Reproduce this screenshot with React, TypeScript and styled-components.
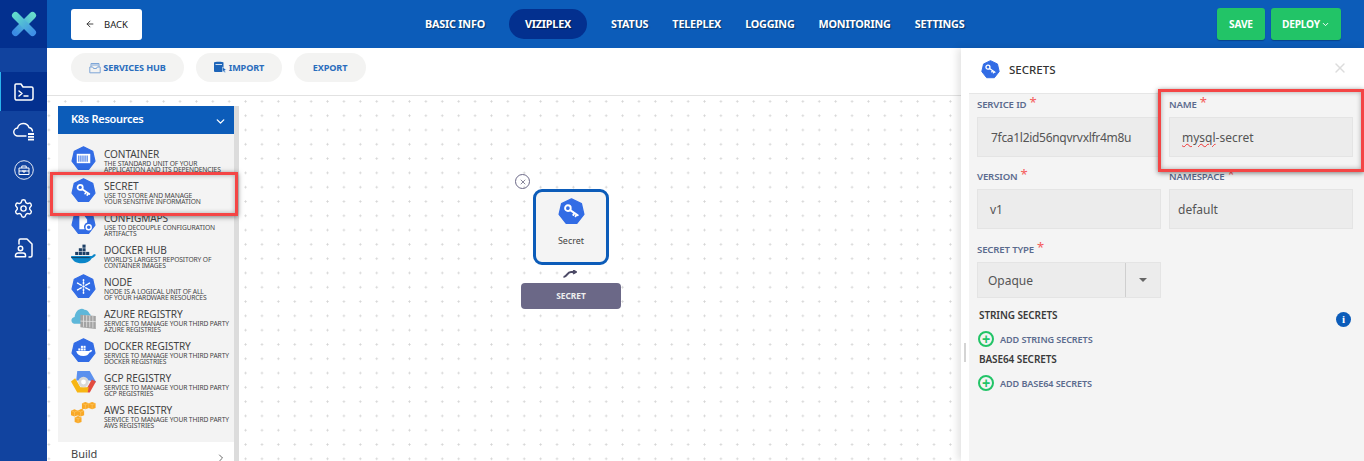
import React from "react";
import styled, { createGlobalStyle } from "styled-components";
import { ArrowLeft, ChevronDown, ChevronRight, Settings, X } from "lucide-react";

const GlobalStyle = createGlobalStyle`
    html, body {
        margin: 0;
        height: 461px;
        overflow: hidden;
        background: #fff;
        font-family: "Noto Sans", "Open Sans", sans-serif;
    }
    * { box-sizing: border-box; }
`;

const Page = styled.div`
    display: flex;
    width: 1364px;
    height: 461px;
    overflow: hidden;
`;

const Sidebar = styled.aside`
    width: 47px;
    flex: none;
    background: #11439f;
`;
const LogoBox = styled.div`
    height: 48px;
    margin-bottom: 24px;
    background: #03308f;
    display: flex;
    align-items: center;
    justify-content: center;
`;
const SideItem = styled.div<{ $active?: boolean }>`
    height: 39px;
    display: flex;
    align-items: center;
    justify-content: center;
    color: #fff;
    background: ${(p) => (p.$active ? "#03308f" : "transparent")};
    border-left: ${(p) => (p.$active ? "1px solid #2bb4ee" : "none")};
`;

const Main = styled.div`
    flex: 1;
    min-width: 0;
    display: flex;
    flex-direction: column;
`;
const Topbar = styled.header`
    height: 48px;
    flex: none;
    background: #0c5cb9;
    display: flex;
    align-items: center;
    padding: 0 23px 0 24px;
`;
const BackButton = styled.button`
    width: 71px;
    height: 31px;
    border: none;
    border-radius: 3px;
    background: #fff;
    color: #222;
    font: 400 9.5px "Noto Sans", sans-serif;
    display: flex;
    align-items: center;
    justify-content: center;
    gap: 9px;
    padding: 0;
`;
const Nav = styled.nav`
    margin-left: 271px;
    display: flex;
    align-items: center;
`;
const NavItem = styled.span<{ $active?: boolean }>`
    height: 30px;
    line-height: 30px;
    padding: 0 ${(p) => (p.$active ? "16px" : "12px")};
    margin: 0 ${(p) => (p.$active ? "12px" : "0")};
    border-radius: 15px;
    background: ${(p) => (p.$active ? "#03308f" : "transparent")};
    color: #fff;
    font-size: 10.8px;
    font-weight: 700;
    letter-spacing: -0.2px;
    text-shadow: 1px 1px 1px rgba(0, 0, 0, 0.45);
    white-space: nowrap;
`;
const Actions = styled.div`
    margin-left: auto;
    display: flex;
    gap: 6px;
`;
const ActionButton = styled.button<{ $width: number }>`
    width: ${(p) => p.$width}px;
    height: 32px;
    border: none;
    border-radius: 3px;
    background: #22c467;
    color: #fff;
    font: 700 10.2px "Noto Sans", sans-serif;
    letter-spacing: -0.2px;
    display: flex;
    align-items: center;
    justify-content: center;
    gap: 1px;
    padding: 0;
    box-shadow: 0 1px 1px rgba(0, 0, 0, 0.25);
`;

const Content = styled.div`
    flex: 1;
    min-height: 0;
    display: flex;
`;
const Workspace = styled.div`
    flex: 1;
    min-width: 0;
    display: flex;
    flex-direction: column;
`;
const Toolbar = styled.div`
    height: 48px;
    flex: none;
    display: flex;
    gap: 12px;
    padding: 5px 0 0 24px;
    border-bottom: 1px solid #e2e2e2;
`;
const Pill = styled.button<{ $width: number }>`
    width: ${(p) => p.$width}px;
    height: 29px;
    border: none;
    border-radius: 15px;
    background: #f3f3f2;
    color: #2a6dbd;
    font: 700 9.1px "Noto Sans", sans-serif;
    letter-spacing: -0.1px;
    display: flex;
    align-items: center;
    justify-content: center;
    gap: 2px;
    padding: 0;
`;

const Canvas = styled.div`
    flex: 1;
    min-height: 0;
    position: relative;
    overflow: hidden;
    padding: 10px 0 0 11px;
    background-color: #fff;
    background-image: radial-gradient(circle, #d4d4d4 0.9px, transparent 1.1px);
    background-size: 16.4px 14.3px;
    background-position: -6.3px -1.75px;
`;
const Palette = styled.div`
    width: 181px;
    height: 355px;
    display: flex;
    border-right: 5px solid #dcdcdc;
`;
const PaletteInner = styled.div`
    width: 176px;
    display: flex;
    flex-direction: column;
`;
const PaletteHeader = styled.div`
    height: 28px;
    flex: none;
    background: #0c5cb9;
    color: #fff;
    display: flex;
    align-items: center;
    justify-content: space-between;
    padding: 0 7px 3px 13px;
    font-size: 11px;
    font-weight: 600;
    letter-spacing: -0.3px;
    svg {
        margin-top: 5px;
    }
`;
const PaletteList = styled.div`
    height: 308px;
    flex: none;
    padding-top: 8px;
    background: #f3f3f3;
`;
const Resource = styled.div<{ $picked?: boolean }>`
    height: 32px;
    position: relative;
    z-index: ${(p) => (p.$picked ? 1 : "auto")};
    display: flex;
    padding-left: 13px;
`;
const ResourceIcon = styled.div`
    width: 25px;
    height: 32px;
    padding-top: 4px;
    flex: none;
    line-height: 0;
`;
const ResourceText = styled.div`
    margin-left: 8px;
    padding-top: 7px;
    color: #444;
    white-space: nowrap;
`;
const ResourceTitle = styled.div`
    font-size: 10.1px;
    line-height: 11px;
    letter-spacing: -0.1px;
`;
const ResourceDesc = styled.div`
    margin-top: 1px;
    font-size: 6.7px;
    line-height: 6.4px;
    letter-spacing: -0.12px;
`;
const Highlight = styled.div<{ $top: number; $right: number; $bottom: number; $left: number }>`
    position: absolute;
    z-index: -1;
    top: ${(p) => p.$top}px;
    right: ${(p) => p.$right}px;
    bottom: ${(p) => p.$bottom}px;
    left: ${(p) => p.$left}px;
    border: 3px solid #f44545;
    background: #f4f4f4;
    box-shadow: 0 1px 5px rgba(0, 0, 0, 0.5), inset 0 0 5px rgba(0, 0, 0, 0.3);
`;
const BuildRow = styled.div`
    flex: 1;
    background: #fff;
    color: #444;
    font-size: 11px;
    display: flex;
    justify-content: space-between;
    padding: 4px 7px 0 13px;
    svg {
        margin-top: 6px;
    }
`;

const NodeClose = styled.div`
    position: absolute;
    left: 468px;
    top: 78px;
    width: 15px;
    height: 15px;
    border: 1px solid #6b6887;
    border-radius: 50%;
    color: #4c4a66;
    display: flex;
    align-items: center;
    justify-content: center;
`;
const Node = styled.div`
    position: absolute;
    left: 486px;
    top: 93px;
    width: 76px;
    height: 76px;
    border: 3px solid #0c5cb9;
    border-radius: 9px;
    background: #f4f4f4;
    display: flex;
    flex-direction: column;
    align-items: center;
    padding-top: 6px;
    color: #444;
    font-size: 9px;
    gap: 9px;
`;
const NodeLink = styled.div`
    position: absolute;
    left: 516px;
    top: 174px;
    line-height: 0;
`;
const NodeTag = styled.div`
    position: absolute;
    left: 474px;
    top: 187px;
    width: 100px;
    height: 26px;
    padding-bottom: 1px;
    border-radius: 4px;
    background: #6b6887;
    color: #eee;
    font-size: 8.4px;
    font-weight: 700;
    display: flex;
    align-items: center;
    justify-content: center;
`;

const Panel = styled.section`
    width: 403px;
    flex: none;
    display: flex;
    flex-direction: column;
    background: #fff;
    position: relative;
    box-shadow: -3px 0 8px rgba(0, 0, 0, 0.12);
`;
const PanelHead = styled.div`
    height: 45px;
    flex: none;
    display: flex;
    align-items: center;
    padding: 0 16px 3px 20px;
    gap: 9px;
    color: #333;
    font-size: 11.5px;
    font-weight: 500;
`;
const CloseButton = styled.div`
    margin: -2px 0 0 auto;
    color: #dcdcdc;
    line-height: 0;
`;
const PanelBody = styled.div`
    flex: 1;
    margin-left: 8px;
    padding: 0 13px 0 8px;
    background: #f4f4f4;
    border-top: 1px solid #e6e6e6;
`;
const Handle = styled.div`
    position: absolute;
    left: 3px;
    top: 295px;
    width: 2px;
    height: 19px;
    background: #d4d4d4;
`;
const FormGrid = styled.div`
    display: grid;
    grid-template-columns: 184px 184px;
    column-gap: 8px;
    row-gap: 9px;
`;
const Field = styled.div`
    position: relative;
    z-index: 1;
`;
const NameField = styled(Field)`
    z-index: 2;
`;
const SelectField = styled(Field)`
    margin-top: 1px;
`;
const FieldLabel = styled.div`
    height: 20px;
    margin-bottom: 3px;
    display: flex;
    align-items: center;
    gap: 3px;
    color: #5b6b8e;
    font-size: 9.6px;
    font-weight: 600;
    letter-spacing: -0.15px;
`;
const Star = styled.span`
    color: #f45a5a;
    font-size: 13px;
    font-weight: 400;
    line-height: 13px;
    margin-top: -3px;
`;
const InputBox = styled.div<{ $indent: number; $tracking?: number }>`
    height: 40px;
    display: flex;
    align-items: center;
    padding-left: ${(p) => p.$indent}px;
    background: #ececec;
    border: 1px solid #e4e4e4;
    color: #555;
    font-size: 12px;
    letter-spacing: ${(p) => p.$tracking ?? 0}px;
    white-space: nowrap;
    overflow: hidden;
`;
const Misspelled = styled.span`
    text-decoration: underline wavy #e33;
    text-decoration-thickness: 1px;
`;
const SelectBox = styled.div`
    width: 184px;
    height: 36px;
    display: flex;
    background: #ececec;
    border: 1px solid #e4e4e4;
    color: #555;
    font-size: 12px;
`;
const SelectValue = styled.div`
    flex: 1;
    display: flex;
    align-items: center;
    padding-left: 10px;
    border-right: 1px solid #cfcfcf;
`;
const SelectCaret = styled.div`
    width: 34px;
    display: flex;
    align-items: center;
    justify-content: center;
    &::after {
        content: "";
        border: 4px solid transparent;
        border-top: 4px solid #666;
        margin-top: 4px;
    }
`;
const Section = styled.div`
    margin-top: 9px;
    padding-left: 2px;
`;
const SectionHead = styled.div`
    height: 16px;
    display: flex;
    align-items: center;
    justify-content: space-between;
    color: #3a3a3a;
    font-size: 10px;
    font-weight: 600;
    letter-spacing: -0.1px;
`;
const InfoDot = styled.div`
    width: 15px;
    height: 15px;
    border-radius: 50%;
    background: #0c5cb9;
    color: #fff;
    font: 700 11px "Liberation Serif", serif;
    display: flex;
    align-items: center;
    justify-content: center;
    margin-top: 8px;
`;
const AddRow = styled.div`
    height: 16px;
    margin: 8px 0 4px;
    display: flex;
    align-items: center;
    gap: 6px;
    color: #5b6b8e;
    font-size: 9.1px;
    font-weight: 600;
    letter-spacing: -0.1px;
`;
const AddCircle = styled.span`
    width: 16px;
    height: 16px;
    margin-left: -1px;
    border: 2px solid #22c467;
    border-radius: 50%;
    color: #22c467;
    display: flex;
    align-items: center;
    justify-content: center;
    font: 700 14px/1 "Liberation Sans", sans-serif;
`;

const HEPT = "M12 .8 20.8 5 23 14.6 16.9 22.4H7.1L1 14.6 3.2 5Z";
const BLUE = "#326ce5";

const Hept: React.FC<{ size?: number; children?: React.ReactNode }> = ({ size = 25, children }) => (
    <svg width={size} height={size} viewBox="0 0 24 24">
        <path d={HEPT} fill={BLUE} stroke={BLUE} strokeWidth="1.2" strokeLinejoin="round" />
        {children}
    </svg>
);

const KeyMark = () => (
    <g fill="none" stroke="#fff" strokeWidth="1.7" strokeLinecap="round">
        <circle cx="8.8" cy="9" r="2.5" />
        <path d="M10.8 10.8 17.6 15.4M14.6 13.4l-1 1.6M16.6 14.7l-1 1.6" />
    </g>
);

const ContainerIcon = () => (
    <Hept>
        <rect x="5.5" y="7.5" width="13" height="9" fill="#fff" />
        <path d="M7.5 9v6M9.5 9v6M11.5 9v6M13.5 9v6M15.5 9v6" stroke={BLUE} strokeWidth="1" />
    </Hept>
);
const SecretIcon = () => (
    <Hept>
        <KeyMark />
    </Hept>
);
const ConfigIcon = () => (
    <Hept>
        <path d="M8 5h4.5l3 4v3a4.5 4.5 0 0 0-2.5 6.500H8Z" fill="#fff" />
        <circle cx="17" cy="16.500" r="2.400" fill="none" stroke="#fff" strokeWidth="1.400" />
    </Hept>
);
const DockerHubIcon = () => (
    <svg width="25" height="25" viewBox="0 0 24 24">
        <path d="M0 13.500h19c1 0 2.500-1 3-2l2 .8c-1 2-2.500 3-4 3.200-2 3-5 5-9.500 5-6 0-9.500-2.500-10.500-7Z" fill="#0a86c9" />
        <g fill="#1c3f66">
            <rect x="4" y="9.500" width="3" height="3" />
            <rect x="7.500" y="9.500" width="3" height="3" />
            <rect x="11" y="9.500" width="3" height="3" />
            <rect x="7.500" y="6" width="3" height="3" />
            <rect x="11" y="6" width="3" height="3" />
            <rect x="11" y="2.500" width="3" height="3" />
            <rect x="14.500" y="9.500" width="3" height="3" />
        </g>
        <path d="M0 15h18" stroke="#16334f" strokeWidth="0.800" />
    </svg>
);
const NodeIcon = () => (
    <Hept>
        <g stroke="#fff" strokeWidth="1.500" strokeLinecap="round" strokeDasharray="1.600 1.400">
            <path d="M12 9.500V5.500M12 14.500v4M9.800 10.700 6.300 8.800M14.200 13.300l3.500 1.900M9.800 13.300l-3.500 1.900M14.200 10.700l3.500-1.900" />
        </g>
        <circle cx="12" cy="12" r="1.200" fill="#fff" />
    </Hept>
);
const AzureIcon = () => (
    <svg width="25" height="25" viewBox="0 0 24 24">
        <path d="M3 17c-3.500-.500-3.500-6 .500-6.500C4 5 9 1 13 3.500c2 0 4 1.500 4.500 3.500l2 2H10v8Z" fill="#5eb7d9" />
        <path d="M9 8.500 23.800 9.500V22L9 20.500Z" fill="#a3a3a3" />
        <path d="M9 14.500 23.800 15M12 9v11M15 9v11.500M18 9.500v11M21 9.500v11.500" stroke="#e8e8e8" strokeWidth="0.700" />
    </svg>
);
const DockerRegistryIcon = () => (
    <Hept>
        <path d="M5 12.500h12c.8 0 1.500-.6 2-1.200l1.400.6c-.6 1.200-1.600 1.800-2.600 2-1.200 2.200-3 3.400-5.800 3.400-4 0-6.300-1.700-7-4.800Z" fill="#fff" />
        <g fill="#fff">
            <rect x="7" y="10" width="2" height="2" />
            <rect x="9.500" y="10" width="2" height="2" />
            <rect x="12" y="10" width="2" height="2" />
            <rect x="9.500" y="7.500" width="2" height="2" />
            <rect x="12" y="7.500" width="2" height="2" />
        </g>
    </Hept>
);
const GcpIcon = () => (
    <svg width="25" height="25" viewBox="0 0 24 24">
        <path d="M6 1h12l6 10.500-3.500 2-2-3.500H5Z" fill="#5b90ee" />
        <path d="M18 21.500 24 11l-4-1.800-5.500 9.500 1.500 2.800Z" fill="#e34c3f" />
        <path d="M6 21.500 0 11l4-3 5 8.500h8l-1 5Z" fill="#f7b614" />
        <circle cx="12" cy="11.500" r="5" fill="#d9d9d9" />
        <circle cx="12" cy="11.500" r="2.300" fill="#fff" />
    </svg>
);
const AwsIcon = () => {
    const cube = (x: number, y: number, key: string) => (
        <g key={key}>
            <path d={`M${x} ${y + 1.300}l3.300-1.300 3.300 1.300v4.400l-3.300 1.300-3.300-1.300Z`} fill="#f9a825" />
            <path d={`M${x} ${y + 1.300}l3.300 1.300 3.300-1.300M${x + 3.300} ${y + 2.600}v4.400`} stroke="#fcd98a" strokeWidth="0.400" fill="none" />
        </g>
    );
    return (
        <svg width="25" height="25" viewBox="0 0 24 24">
            <path d="M6 11 13 5" stroke="#f9a825" strokeWidth="1.200" />
            {cube(10.500, 0, "a")}
            {cube(17, 0, "b")}
            {cube(0, 7, "c")}
            {cube(6, 7, "d")}
            {cube(3.500, 13.500, "e")}
        </svg>
    );
};

const FolderTerminal = () => (
    <svg width="20" height="18" viewBox="0 0 20 18" fill="none" stroke="#fff" strokeWidth="1.500" strokeLinecap="round" strokeLinejoin="round">
        <path d="M1 3.500V15a2 2 0 0 0 1 2h15a2 2 0 0 0 2-2V5.500a1.500 1.500 0 0 0-1.500-1.500H9L7 1H2a1 1 0 0 0-1 1Z" />
        <path d="m5 8 3 2.500L5 13M10 13h4" />
    </svg>
);
const CloudList = () => (
    <svg width="22" height="20" viewBox="0 0 22 20" fill="none" stroke="#fff" strokeWidth="1.400" strokeLinecap="round">
        <path d="M13 15H5a4 4 0 0 1-.5-8A6 6 0 0 1 16 6.500c2 .3 3.200 1.600 3.500 3.500" />
        <path d="M15 13h6M15 15.800h6M15 18.600h6" strokeWidth="1.800" strokeLinecap="butt" />
    </svg>
);
const CaseCircle = () => (
    <svg width="20" height="20" viewBox="0 0 20 20" fill="none" stroke="#fff">
        <circle cx="10" cy="10" r="9.300" strokeWidth="0.900" />
        <path d="M5 8h10v6.500H5ZM7.800 8V6h4.400v2M5 11h10M9 10v2h2v-2" strokeWidth="1" />
    </svg>
);
const DocPerson = () => (
    <svg width="20" height="20" viewBox="0 0 20 20" fill="none" stroke="#fff" strokeWidth="1.500" strokeLinecap="round" strokeLinejoin="round">
        <path d="M5 6V2.500A1.500 1.500 0 0 1 6.500 1H13l5 5v11.500a1.500 1.500 0 0 1-1.500 1.500H15" />
        <circle cx="6.500" cy="10.500" r="2.200" />
        <path d="M1.500 18.800v-1.300A2.500 2.500 0 0 1 4 15h5a2.500 2.500 0 0 1 2.500 2.500v1.300Z" />
    </svg>
);
const Logo = () => (
    <svg width="26" height="26" viewBox="0 0 26 26" fill="none" strokeWidth="7" strokeLinecap="round">
        <defs>
            <linearGradient id="logoA" gradientUnits="userSpaceOnUse" x1="4" y1="4" x2="22" y2="22">
                <stop offset="0" stopColor="#5fdacb" />
                <stop offset="1" stopColor="#3f8fe6" />
            </linearGradient>
            <linearGradient id="logoB" gradientUnits="userSpaceOnUse" x1="22" y1="4" x2="4" y2="22">
                <stop offset="0" stopColor="#66dccb" />
                <stop offset="1" stopColor="#3a8ae4" />
            </linearGradient>
        </defs>
        <path d="M4.500 21.500 21.500 4.500" stroke="url(#logoB)" />
        <path d="M4.500 4.500 21.500 21.500" stroke="url(#logoA)" />
    </svg>
);
const HubIcon = () => (
    <svg width="12" height="12" viewBox="0 0 12 12" fill="none" stroke="#7ea6d8" strokeWidth="1">
        <path d="M2 5V1.500h8V5M.8 5h3l.7 1.500h3L8.200 5h3v5.800H.8Z" />
        <path d="M2.500 3h7" />
    </svg>
);
const ImportIcon = () => (
    <svg width="13" height="13" viewBox="0 0 13 13">
        <path d="M0 1.500C0 .5 9.500.5 9.500 1.500V11H1a1 1 0 0 1-1-1Z" fill="#1d64b8" />
        <path d="M1.500 3.500h6.500" stroke="#fff" strokeWidth="0.800" />
        <path d="m8.500 6 4 3-1.800.3.900 2-1 .5-.9-2-1.200 1.200Z" fill="#1d64b8" stroke="#fff" strokeWidth="0.500" />
    </svg>
);

const resources = [
    { icon: <ContainerIcon />, title: "CONTAINER", lines: ["THE STANDARD UNIT OF YOUR", "APPLICATION AND ITS DEPENDENCIES"] },
    { icon: <SecretIcon />, title: "SECRET", lines: ["USE TO STORE AND MANAGE", "YOUR SENSITIVE INFORMATION"], picked: true },
    { icon: <ConfigIcon />, title: "CONFIGMAPS", lines: ["USE TO DECOUPLE CONFIGURATION", "ARTIFACTS"] },
    { icon: <DockerHubIcon />, title: "DOCKER HUB", lines: ["WORLD'S LARGEST REPOSITORY OF", "CONTAINER IMAGES"] },
    { icon: <NodeIcon />, title: "NODE", lines: ["NODE IS A LOGICAL UNIT OF ALL", "OF YOUR HARDWARE RESOURCES"] },
    { icon: <AzureIcon />, title: "AZURE REGISTRY", lines: ["SERVICE TO MANAGE YOUR THIRD PARTY", "AZURE REGISTRIES"] },
    { icon: <DockerRegistryIcon />, title: "DOCKER REGISTRY", lines: ["SERVICE TO MANAGE YOUR THIRD PARTY", "DOCKER REGISTRIES"] },
    { icon: <GcpIcon />, title: "GCP REGISTRY", lines: ["SERVICE TO MANAGE YOUR THIRD PARTY", "GCP REGISTRIES"] },
    { icon: <AwsIcon />, title: "AWS REGISTRY", lines: ["SERVICE TO MANAGE YOUR THIRD PARTY", "AWS REGISTRIES"] },
];

const navItems = ["BASIC INFO", "VIZIPLEX", "STATUS", "TELEPLEX", "LOGGING", "MONITORING", "SETTINGS"];

export default function App() {
    return (
        <Page>
            <GlobalStyle />
            <Sidebar>
                <LogoBox>
                    <Logo />
                </LogoBox>
                <SideItem $active>
                    <FolderTerminal />
                </SideItem>
                <SideItem>
                    <CloudList />
                </SideItem>
                <SideItem>
                    <CaseCircle />
                </SideItem>
                <SideItem>
                    <Settings size={21} strokeWidth={1.6} />
                </SideItem>
                <SideItem>
                    <DocPerson />
                </SideItem>
            </Sidebar>
            <Main>
                <Topbar>
                    <BackButton>
                        <ArrowLeft size={10} strokeWidth={2} />
                        BACK
                    </BackButton>
                    <Nav>
                        {navItems.map((n) => (
                            <NavItem key={n} $active={n === "VIZIPLEX"}>
                                {n}
                            </NavItem>
                        ))}
                    </Nav>
                    <Actions>
                        <ActionButton $width={48}>SAVE</ActionButton>
                        <ActionButton $width={70}>
                            DEPLOY
                            <ChevronDown size={9} strokeWidth={2.5} />
                        </ActionButton>
                    </Actions>
                </Topbar>
                <Content>
                    <Workspace>
                        <Toolbar>
                            <Pill $width={113}>
                                <HubIcon />
                                SERVICES HUB
                            </Pill>
                            <Pill $width={86}>
                                <ImportIcon />
                                IMPORT
                            </Pill>
                            <Pill $width={72}>EXPORT</Pill>
                        </Toolbar>
                        <Canvas>
                            <Palette>
                                <PaletteInner>
                                    <PaletteHeader>
                                        K8s Resources
                                        <ChevronDown size={13} strokeWidth={2.5} />
                                    </PaletteHeader>
                                    <PaletteList>
                                        {resources.map((r) => (
                                            <Resource key={r.title} $picked={r.picked}>
                                                {r.picked && <Highlight $top={-2} $right={-4} $bottom={-10} $left={-8} />}
                                                <ResourceIcon>{r.icon}</ResourceIcon>
                                                <ResourceText>
                                                    <ResourceTitle>{r.title}</ResourceTitle>
                                                    <ResourceDesc>
                                                        {r.lines[0]}
                                                        <br />
                                                        {r.lines[1]}
                                                    </ResourceDesc>
                                                </ResourceText>
                                            </Resource>
                                        ))}
                                    </PaletteList>
                                    <BuildRow>
                                        Build
                                        <ChevronRight size={12} strokeWidth={1.6} />
                                    </BuildRow>
                                </PaletteInner>
                            </Palette>
                            <NodeClose>
                                <X size={8} strokeWidth={2} />
                            </NodeClose>
                            <Node>
                                <Hept size={27}>
                                    <KeyMark />
                                </Hept>
                                Secret
                            </Node>
                            <NodeLink>
                                <svg width="14" height="8" viewBox="0 0 14 8" fill="none" stroke="#4c4a66" strokeWidth="2">
                                    <path d="M.5 7C4 7 4 2 8 2h4M10 .3 13 2l-3 1.700" />
                                </svg>
                            </NodeLink>
                            <NodeTag>SECRET</NodeTag>
                        </Canvas>
                    </Workspace>
                    <Panel>
                        <PanelHead>
                            <Hept size={19}>
                                <KeyMark />
                            </Hept>
                            SECRETS
                            <CloseButton>
                                <X size={16} strokeWidth={2} />
                            </CloseButton>
                        </PanelHead>
                        <PanelBody>
                            <FormGrid>
                                <Field>
                                    <FieldLabel>
                                        SERVICE ID <Star>*</Star>
                                    </FieldLabel>
                                    <InputBox $indent={13} $tracking={-0.3}>
                                        7fca1l2id56nqvrvxlfr4m8u
                                    </InputBox>
                                </Field>
                                <NameField>
                                    <Highlight $top={-5} $right={-11} $bottom={-15} $left={-11} />
                                    <FieldLabel>
                                        NAME <Star>*</Star>
                                    </FieldLabel>
                                    <InputBox $indent={12}>
                                        <span>
                                            <Misspelled>mysql</Misspelled>-secret
                                        </span>
                                    </InputBox>
                                </NameField>
                                <Field>
                                    <FieldLabel>
                                        VERSION <Star>*</Star>
                                    </FieldLabel>
                                    <InputBox $indent={12}>v1</InputBox>
                                </Field>
                                <Field>
                                    <FieldLabel>
                                        NAMESPACE <Star>*</Star>
                                    </FieldLabel>
                                    <InputBox $indent={8}>default</InputBox>
                                </Field>
                                <SelectField>
                                    <FieldLabel>
                                        SECRET TYPE <Star>*</Star>
                                    </FieldLabel>
                                    <SelectBox>
                                        <SelectValue>Opaque</SelectValue>
                                        <SelectCaret />
                                    </SelectBox>
                                </SelectField>
                            </FormGrid>
                            <Section>
                                <SectionHead>
                                    STRING SECRETS
                                    <InfoDot>i</InfoDot>
                                </SectionHead>
                                <AddRow>
                                    <AddCircle>+</AddCircle>
                                    ADD STRING SECRETS
                                </AddRow>
                                <SectionHead>BASE64 SECRETS</SectionHead>
                                <AddRow>
                                    <AddCircle>+</AddCircle>
                                    ADD BASE64 SECRETS
                                </AddRow>
                            </Section>
                        </PanelBody>
                        <Handle />
                    </Panel>
                </Content>
            </Main>
        </Page>
    );
}
